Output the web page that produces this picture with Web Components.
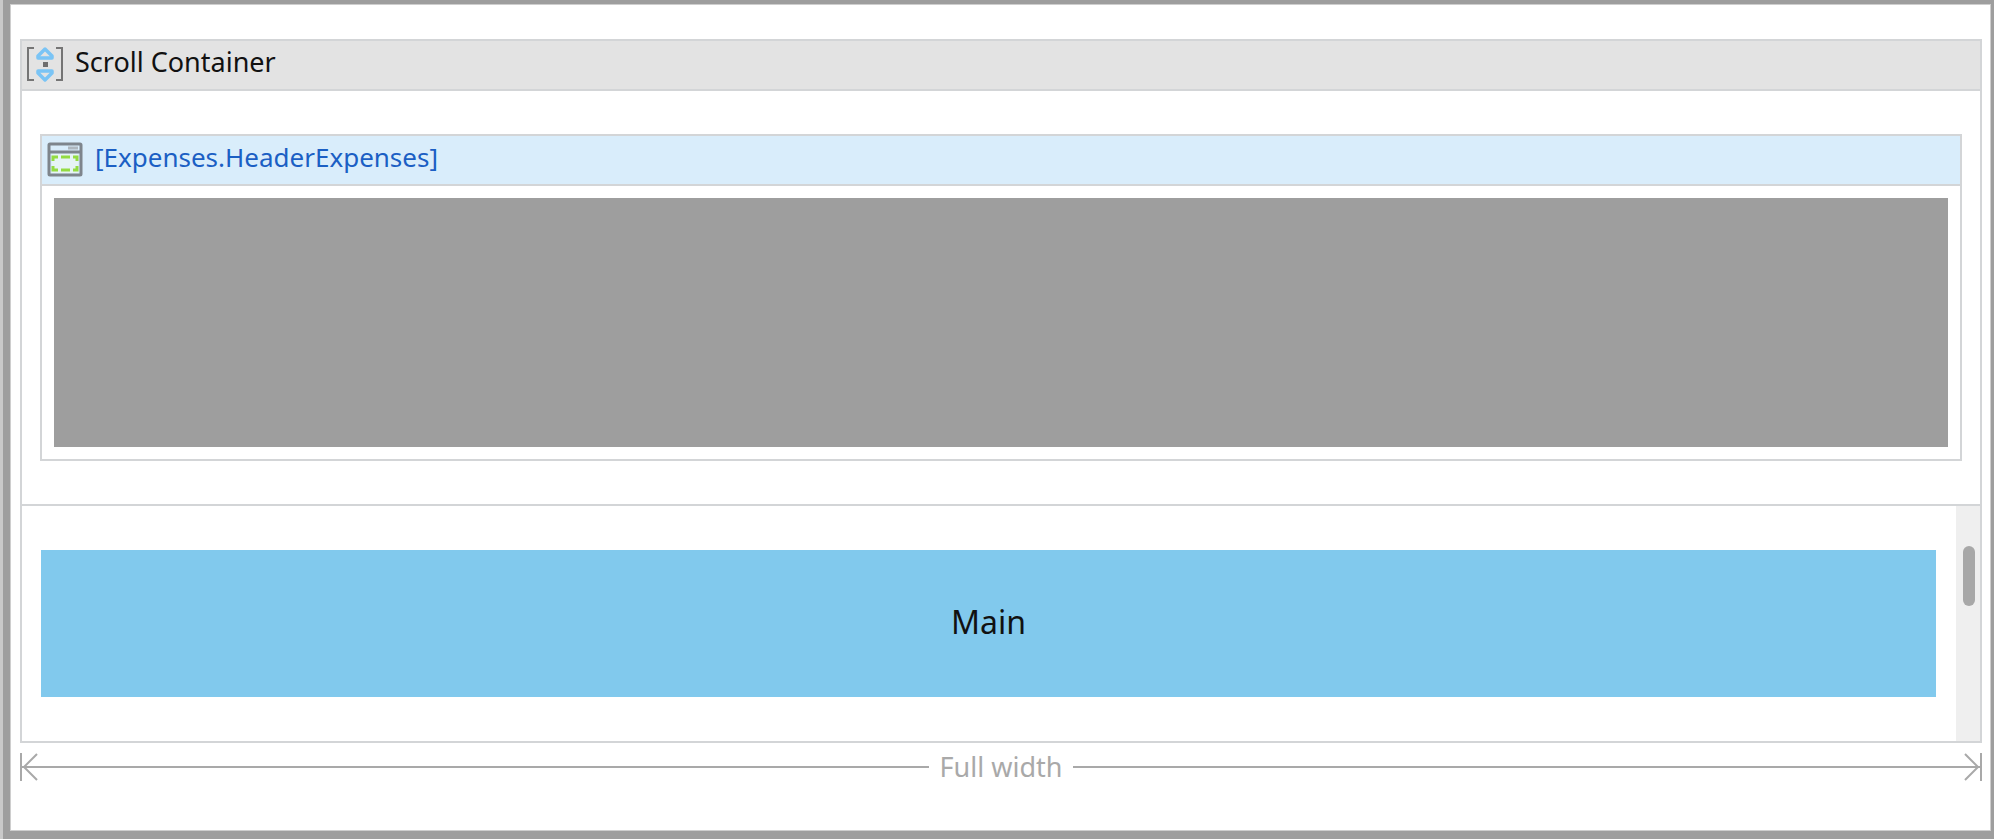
<!DOCTYPE html>
<html lang="en">
<head>
<meta charset="utf-8">
<meta name="viewport" content="width=device-width, initial-scale=1">
<title>Scroll Container</title>
<style>
  html { background: #9e9e9e; }
  body {
    margin: 0;
    border-left: 3px solid #c9c9c9;
    font-family: "Noto Sans", "Open Sans", sans-serif;
    font-size: 27px;
    line-height: 36px;
    color: #111;
  }
</style>
</head>
<body>
<layout-canvas>
  <scroll-container heading="Scroll Container">
    <layout-block slot="header" name="[Expenses.HeaderExpenses]"></layout-block>
    <main-placeholder>Main</main-placeholder>
  </scroll-container>
  <width-ruler>Full width</width-ruler>
</layout-canvas>

<script>
class LayoutCanvas extends HTMLElement {
  constructor() {
    super();
    this.attachShadow({ mode: "open" });
  }

  connectedCallback() {
    this.shadowRoot.innerHTML = /* html */`
      <style>
        :host {
          display: block;
          background: #9e9e9e;
          padding: 4px 3px 8px 7px;
        }

        .page {
          background: white;
          border: 1px solid #cecece;
          padding: 34px 8px 45px 9px;
        }
      </style>
      <div class="page"><slot></slot></div>
    `;
  }
}

class ScrollContainer extends HTMLElement {
  constructor() {
    super();
    this.attachShadow({ mode: "open" });
  }

  connectedCallback() {
    this.shadowRoot.innerHTML = /* html */`
      <style>
        :host {
          display: block;
          border: 2px solid #d3d5d7;
        }

        .title {
          display: flex;
          align-items: center;
          gap: 11px;
          height: 48px;
          padding-left: 4px;
          background: #e3e3e3;
          border-bottom: 2px solid #d3d5d7;
        }

        .title span { padding-bottom: 6px; }

        .header {
          padding: 43px 18px;
          border-bottom: 2px solid #d3d5d7;
        }

        .body { display: flex; }

        .content {
          flex: 1;
          padding: 44px 20px 44px 19px;
        }

        .track {
          width: 24px;
          box-sizing: border-box;
          padding: 40px 5px 0 7px;
          background: #efefef;
        }

        .thumb {
          height: 60px;
          border-radius: 6px;
          background: #a8a8a8;
        }
      </style>

      <div class="title">
        <svg width="38" height="38" viewBox="0 0 38 38" fill="none" aria-hidden="true">
          <path d="M8 2H2V34H8M30 2H36V34H30" stroke="#757575" stroke-width="2"/>
          <path d="M19 3L26 10V12H12V10ZM19 34L26 27V25H12V27Z" stroke="#7ac4f5" stroke-width="3.5" stroke-linejoin="round"/>
          <rect x="17" y="16" width="5" height="5" fill="#6e6e6e"/>
        </svg>
        <span>${this.getAttribute("heading")}</span>
      </div>
      <div class="header"><slot name="header"></slot></div>
      <div class="body">
        <div class="content"><slot></slot></div>
        <div class="track"><div class="thumb"></div></div>
      </div>
    `;
  }
}

class LayoutBlock extends HTMLElement {
  constructor() {
    super();
    this.attachShadow({ mode: "open" });
  }

  connectedCallback() {
    this.shadowRoot.innerHTML = /* html */`
      <style>
        :host {
          display: block;
          border: 2px solid #d3d5d7;
        }

        .title {
          display: flex;
          align-items: center;
          gap: 11px;
          height: 48px;
          padding-left: 4px;
          background: #d9edfb;
          border-bottom: 2px solid #d3d5d7;
        }

        a {
          padding-bottom: 6px;
          font-size: 26px;
          color: #1b5fc4;
          text-decoration: none;
        }

        .content { padding: 12px; }

        .fill {
          height: 249px;
          background: #9e9e9e;
        }
      </style>

      <div class="title">
        <svg width="38" height="38" viewBox="0 0 38 38" fill="none" aria-hidden="true">
          <rect x="3" y="3" width="32" height="31" rx="1" stroke="#7e858c" stroke-width="3"/>
          <path d="M3 11H35" stroke="#7e858c" stroke-width="3"/>
          <path d="M22 7H32" stroke="#aeb7be" stroke-width="3"/>
          <path d="M6 16V13H32V32H6Z" fill="#e6f4f5"/>
          <path d="M7 20V16H12M15 16H24M27 16H31V20M31 25V29H27M24 29H15M12 29H7V25" stroke="#93dc42" stroke-width="3"/>
        </svg>
        <a href="#">${this.getAttribute("name")}</a>
      </div>
      <div class="content"><div class="fill"></div></div>
    `;
  }
}

class MainPlaceholder extends HTMLElement {
  constructor() {
    super();
    this.attachShadow({ mode: "open" });
  }

  connectedCallback() {
    this.shadowRoot.innerHTML = /* html */`
      <style>
        :host {
          display: flex;
          align-items: center;
          justify-content: center;
          height: 147px;
          box-sizing: border-box;
          padding-bottom: 4px;
          background: #81c9ed;
          font-size: 32px;
        }
      </style>
      <slot></slot>
    `;
  }
}

class WidthRuler extends HTMLElement {
  constructor() {
    super();
    this.attachShadow({ mode: "open" });
  }

  connectedCallback() {
    this.shadowRoot.innerHTML = /* html */`
      <style>
        :host {
          display: flex;
          align-items: center;
          padding-top: 6px;
          color: #a9a9a9;
        }

        .line {
          flex: 1;
          height: 2px;
          background: #a9a9a9;
        }

        .label { padding: 0 11px; }
      </style>

      <svg width="18" height="28" viewBox="0 0 18 28" fill="none" stroke="#a9a9a9" stroke-width="2" aria-hidden="true">
        <path d="M1 0V28M1 14H18M17 1L4 14L17 27"/>
      </svg>
      <div class="line"></div>
      <span class="label"><slot></slot></span>
      <div class="line"></div>
      <svg width="18" height="28" viewBox="0 0 18 28" fill="none" stroke="#a9a9a9" stroke-width="2" aria-hidden="true">
        <path d="M17 0V28M17 14H0M1 1L14 14L1 27"/>
      </svg>
    `;
  }
}

customElements.define("layout-canvas", LayoutCanvas);
customElements.define("scroll-container", ScrollContainer);
customElements.define("layout-block", LayoutBlock);
customElements.define("main-placeholder", MainPlaceholder);
customElements.define("width-ruler", WidthRuler);
</script>
</body>
</html>
